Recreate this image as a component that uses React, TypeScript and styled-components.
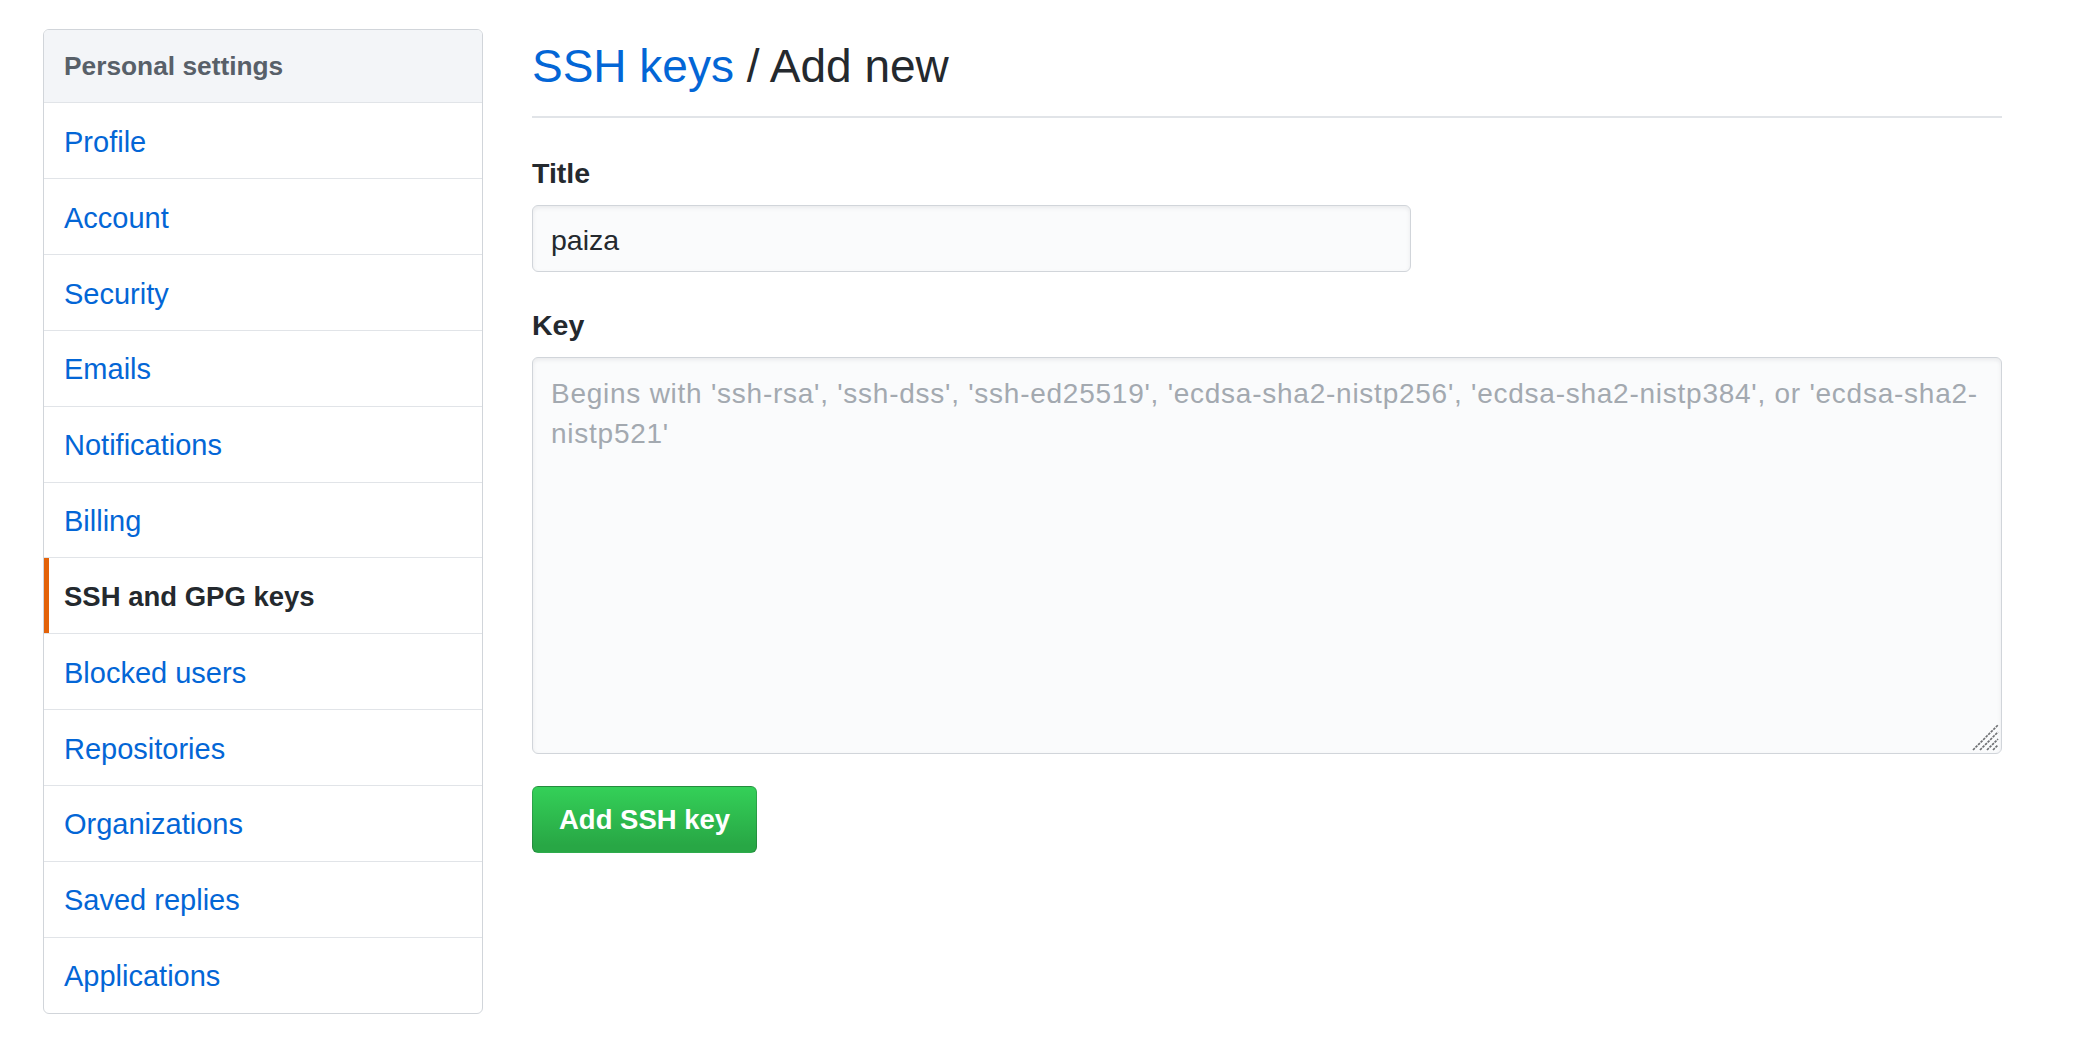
import React from 'react';
import styled, { createGlobalStyle } from 'styled-components';

const GlobalStyle = createGlobalStyle`
  html, body {
    margin: 0;
    padding: 0;
    background: #ffffff;
  }
  body {
    font-family: "Liberation Sans", Arial, sans-serif;
    color: #24292e;
  }
  * {
    box-sizing: border-box;
  }
`;

const menuItems = [
  'Profile',
  'Account',
  'Security',
  'Emails',
  'Notifications',
  'Billing',
  'SSH and GPG keys',
  'Blocked users',
  'Repositories',
  'Organizations',
  'Saved replies',
  'Applications',
];

const SELECTED = 'SSH and GPG keys';
const KEY_PLACEHOLDER =
  "Begins with 'ssh-rsa', 'ssh-dss', 'ssh-ed25519', 'ecdsa-sha2-nistp256', 'ecdsa-sha2-nistp384', or 'ecdsa-sha2-nistp521'";

function ResizeGrip() {
  return (
    <Grip width="30" height="30" viewBox="0 0 30 30">
      <line x1="3" y1="28" x2="28" y2="3" />
      <line x1="10" y1="28" x2="28" y2="10" />
      <line x1="17" y1="28" x2="28" y2="17" />
      <line x1="23" y1="28" x2="28" y2="23" />
    </Grip>
  );
}

function App() {
  return (
    <>
      <GlobalStyle />
      <Page>
        <Sidebar>
          <MenuHeading>Personal settings</MenuHeading>
          {menuItems.map((item) => (
            <MenuItem key={item} href="#" $selected={item === SELECTED}>
              {item}
            </MenuItem>
          ))}
        </Sidebar>

        <Main>
          <Subhead>
            <Heading>
              <Crumb href="#">SSH keys</Crumb> / Add new
            </Heading>
          </Subhead>

          <FormGroup>
            <Label htmlFor="ssh-title">Title</Label>
            <TextInput id="ssh-title" type="text" defaultValue="paiza" />
          </FormGroup>

          <FormGroup>
            <Label htmlFor="ssh-key">Key</Label>
            <TextAreaWrap>
              <KeyArea id="ssh-key" placeholder={KEY_PLACEHOLDER} />
              <ResizeGrip />
            </TextAreaWrap>
          </FormGroup>

          <PrimaryButton type="button">Add SSH key</PrimaryButton>
        </Main>
      </Page>
    </>
  );
}

export default App;

const Page = styled.div`
  display: flex;
  align-items: flex-start;
  gap: 49px;
  padding: 29px 0 0 43px;
`;

const Sidebar = styled.nav`
  display: flex;
  flex-direction: column;
  width: 440px;
  border: 1px solid #d1d5da;
  border-radius: 6px;
  overflow: hidden;
`;

const MenuHeading = styled.div`
  display: flex;
  align-items: center;
  height: 72.4px;
  padding: 1px 20px 0;
  background: #f3f5f8;
  color: #586069;
  font-size: 26.3px;
  font-weight: 700;
`;

const MenuItem = styled.a<{ $selected?: boolean }>`
  display: flex;
  align-items: center;
  height: 75.85px;
  padding: 3px 20px 0;
  border-top: 1px solid #e1e4e8;
  font-size: ${(p) => (p.$selected ? '27.5px' : '29px')};
  font-weight: ${(p) => (p.$selected ? 700 : 400)};
  color: ${(p) => (p.$selected ? '#24292e' : '#0366d6')};
  text-decoration: none;
  box-shadow: ${(p) => (p.$selected ? 'inset 5px 0 0 #e36209' : 'none')};

  &:last-child {
    height: 76.6px;
  }
`;

const Main = styled.main`
  display: flex;
  flex-direction: column;
  align-items: flex-start;
  width: 1470px;
`;

const Subhead = styled.div`
  align-self: stretch;
  padding: 7px 0 20px;
  border-bottom: 2px solid #e1e4e8;
`;

const Heading = styled.h2`
  margin: 0;
  font-size: 46px;
  font-weight: 400;
  line-height: 60px;
  color: #24292e;
`;

const Crumb = styled.a`
  color: #0366d6;
  text-decoration: none;
`;

const FormGroup = styled.div`
  display: flex;
  flex-direction: column;
  align-self: stretch;
  gap: 12px;
  margin-top: 35px;

  & + & {
    margin-top: 33px;
  }
`;

const Label = styled.label`
  font-size: 28.5px;
  font-weight: 700;
  line-height: 40px;
  color: #24292e;
`;

const TextInput = styled.input`
  width: 879px;
  height: 67px;
  padding: 4px 18px 0;
  font-family: "Liberation Sans", Arial, sans-serif;
  font-size: 28.5px;
  color: #24292e;
  background: #fafbfc;
  border: 1px solid #d1d5da;
  border-radius: 6px;
  box-shadow: inset 0 2px 4px rgba(27, 31, 35, 0.075);
  outline: none;
`;

const TextAreaWrap = styled.div`
  position: relative;
  width: 100%;
  height: 397px;
`;

const KeyArea = styled.textarea`
  display: block;
  width: 100%;
  height: 100%;
  padding: 16px 10px 12px 18px;
  font-family: "Liberation Sans", Arial, sans-serif;
  font-size: 28px;
  line-height: 40px;
  letter-spacing: 0.75px;
  color: #24292e;
  background: #fafbfc;
  border: 1px solid #d1d5da;
  border-radius: 6px;
  box-shadow: inset 0 2px 4px rgba(27, 31, 35, 0.075);
  outline: none;
  resize: none;

  &::placeholder {
    color: #a3a9b0;
    opacity: 1;
  }
`;

const Grip = styled.svg`
  position: absolute;
  right: 2px;
  bottom: 2px;
  pointer-events: none;

  line {
    stroke: #6f7174;
    stroke-width: 1.7;
    stroke-dasharray: 2.6 1;
  }
`;

const PrimaryButton = styled.button`
  margin-top: 32px;
  height: 67px;
  padding: 0 26px;
  font-family: "Liberation Sans", Arial, sans-serif;
  font-size: 27.5px;
  font-weight: 700;
  color: #ffffff;
  background-color: #28a745;
  background-image: linear-gradient(-180deg, #34d058 0%, #28a745 90%);
  border: 1px solid rgba(27, 31, 35, 0.2);
  border-radius: 6px;
  cursor: pointer;
`;
